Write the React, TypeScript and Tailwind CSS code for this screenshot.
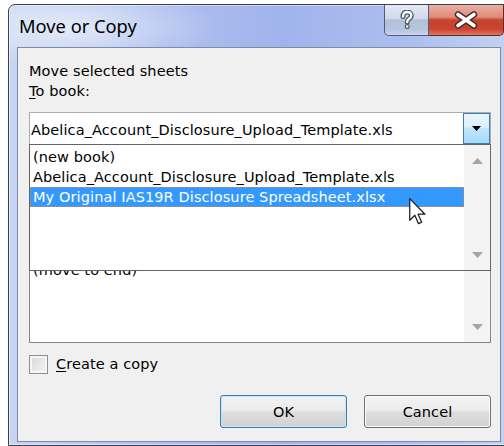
import React from 'react';

// Win7 style "Move or Copy" dialog with the book dropdown opened
const books = [
  '(new book)',
  'Abelica_Account_Disclosure_Upload_Template.xls',
  'My Original IAS19R Disclosure Spreadsheet.xlsx',
];
const selectedBook = 2;

const uiFont = "font-['DejaVu_Sans',Tahoma,sans-serif]";

const ScrollArrow = ({ dir }: { dir: 'up' | 'down' }) => (
  <svg width="11" height="6" viewBox="0 0 11 6">
    <path d={dir === 'up' ? 'M0 6 L5.5 0 L11 6 Z' : 'M0 0 L11 0 L5.5 6 Z'} fill="#a6a6a6" />
  </svg>
);

const ScrollBar = () => (
  <div className="w-[26px] bg-[#f4f4f4] flex flex-col justify-between">
    <div className="h-[31px] flex items-center justify-center">
      <ScrollArrow dir="up" />
    </div>
    <div className="h-[30px] flex items-center justify-center">
      <ScrollArrow dir="down" />
    </div>
  </div>
);

const Cursor = () => (
  <svg width="17" height="27" viewBox="0 0 12.5 20" className="absolute left-[379px] top-[53px]">
    <path
      d="M0.5 0.5 L0.5 16.5 L4.3 12.8 L7 19 L9.3 18 L6.7 12 L11.8 12 Z"
      fill="#ffffff"
      stroke="#1a1a1a"
      strokeWidth="0.9"
      strokeLinejoin="round"
    />
  </svg>
);

const CaptionButtons = () => (
  <div className="flex mr-[5px]">
    {/* 도움말 */}
    <div className="w-[45px] h-[31px] flex items-center justify-center border border-t-0 border-[#4f5d78] rounded-bl-[5px] bg-[linear-gradient(#e4eaf4_0%,#d0daea_45%,#b1bfd8_50%,#b7c6df_85%,#cbd7ea_100%)]">
      <svg width="16" height="20" viewBox="0 0 16 20">
        <path
          d="M4 6.5 C4 3.5 6 2 8.2 2 C10.6 2 12.3 3.5 12.3 5.6 C12.3 7.6 10.8 8.4 9.6 9.2 C8.6 9.9 8.2 10.6 8.2 12"
          fill="none"
          stroke="#4d5566"
          strokeWidth="5"
          strokeLinecap="round"
        />
        <circle cx="8.2" cy="16.5" r="2.5" fill="#4d5566" />
        <path
          d="M4 6.5 C4 3.5 6 2 8.2 2 C10.6 2 12.3 3.5 12.3 5.6 C12.3 7.6 10.8 8.4 9.6 9.2 C8.6 9.9 8.2 10.6 8.2 12"
          fill="none"
          stroke="#ffffff"
          strokeWidth="2.4"
          strokeLinecap="round"
        />
        <circle cx="8.2" cy="16.5" r="1.3" fill="#ffffff" />
      </svg>
    </div>
    {/* 닫기 */}
    <div className="w-[75px] h-[31px] flex items-center justify-center border border-t-0 border-l-0 border-[#5b2b26] rounded-br-[5px] bg-[linear-gradient(#eab0a3_0%,#e08c7a_40%,#c8432e_50%,#c94430_80%,#e0775c_100%)]">
      <svg width="24" height="18" viewBox="0 0 24 18">
        <path d="M4 3.5 L20 14.5 M20 3.5 L4 14.5" stroke="#4a2b28" strokeWidth="6.5" strokeLinecap="round" />
        <path d="M4 3.5 L20 14.5 M20 3.5 L4 14.5" stroke="#ffffff" strokeWidth="3.6" strokeLinecap="round" />
      </svg>
    </div>
  </div>
);

const Button = ({ label, isDefault = false }: { label: string; isDefault?: boolean }) => (
  <div
    className={`w-[127px] h-[33px] flex items-center justify-center rounded-[3px] border text-black bg-[linear-gradient(#f3f3f3_0%,#ebebeb_48%,#dedede_52%,#d2d2d2_100%)] ${
      isDefault
        ? 'border-[#3c7fb1] shadow-[inset_0_0_0_1px_#c4e5f6]'
        : 'border-[#707070] shadow-[inset_0_0_0_1px_#fbfbfb]'
    }`}
  >
    {label}
  </div>
);

export default function App() {
  return (
    <div className={`w-[504px] h-[446px] bg-white overflow-hidden ${uiFont}`}>
      <div className="ml-[8px] mt-[4px] w-[502px] h-[442px] rounded-t-[7px] border border-[#3b4152] shadow-[inset_0_0_0_1px_rgba(255,255,255,0.45)] bg-[radial-gradient(ellipse_150px_40px_at_60px_22px,rgba(255,255,255,0.6),transparent),linear-gradient(90deg,#c6d4f2_0%,#aebfee_30%,#a1b3ec_55%,#acbeee_80%,#c2d2f3_100%)] flex flex-col">
        {/* 타이틀 바 */}
        <div className="h-[42px] flex items-start">
          <div className="flex-1 pl-[10px] pt-[11px] text-[18.3px] leading-[20px] text-black font-['Noto_Sans','Open_Sans',sans-serif]">
            Move or Copy
          </div>
          <CaptionButtons />
        </div>

        {/* 본문 */}
        <div className="mx-[8px] h-[395px] border border-[#7f8aa6] bg-[#f0f0f0] pl-[11px] pr-[9px] pt-[13px] flex flex-col text-[14.5px] tracking-[0.1px] leading-[20px] text-black">
          <div className="h-[20px]">Move selected sheets</div>
          <div className="h-[20px]">
            <span className="underline underline-offset-2">T</span>o book:
          </div>

          {/* 콤보박스 + 펼쳐진 목록 */}
          <div className="relative mt-[11px]">
            <div className="h-[33px] flex border border-[#abadb3] bg-white">
              <div className="flex-1 flex items-center pl-[1px] pt-[2px] whitespace-nowrap">{books[1]}</div>
              <div className="w-[27px] flex items-center justify-center border border-[#3c7fb1] bg-[linear-gradient(#eaf6fd_0%,#d9f0fc_45%,#bee6fd_50%,#a7d9f5_100%)]">
                <svg width="9" height="5" viewBox="0 0 9 5">
                  <path d="M0 0 L9 0 L4.5 5 Z" fill="#000000" />
                </svg>
              </div>
            </div>

            <div className="absolute left-0 top-[32px] z-10 w-[462px] h-[127px] flex border border-[#646464] bg-white">
              <div className="flex-1 pt-[2px]">
                {books.map((book, i) => (
                  <div
                    key={book}
                    className={`h-[20px] whitespace-nowrap ${
                      i === selectedBook
                        ? 'bg-[#3399ff] text-white border border-dotted border-[#d08a48] pl-[2px] leading-[18px]'
                        : 'pl-[3px]'
                    }`}
                  >
                    {book}
                  </div>
                ))}
              </div>
              <ScrollBar />
              <Cursor />
            </div>
          </div>

          {/* 시트 목록 */}
          <div className="mt-[25px] h-[173px] flex border border-[#828790] bg-white">
            <div className="flex-1 pt-[89px] pl-[3px]">(move to end)</div>
            <ScrollBar />
          </div>

          <div className="mt-[11px] h-[20px] flex items-center">
            <div className="w-[19px] h-[19px] border border-[#8e8f8f] bg-[linear-gradient(135deg,#d8d8d8_0%,#f4f4f4_100%)] shadow-[inset_0_0_0_2px_#f6f6f6]" />
            <div className="ml-[8px]">
              <span className="underline underline-offset-2">C</span>reate a copy
            </div>
          </div>

          <div className="mt-[21px] flex justify-end gap-[17px]">
            <Button label="OK" isDefault />
            <Button label="Cancel" />
          </div>
        </div>
      </div>
    </div>
  );
}
